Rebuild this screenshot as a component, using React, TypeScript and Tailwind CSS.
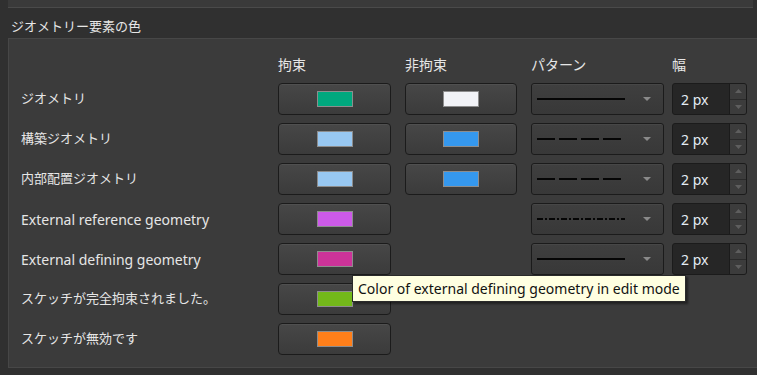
import React from 'react';

type Row = {
  label: string;
  constrained: string;
  unconstrained?: string;
  pattern?: 'solid' | 'dash' | 'dashdot';
};

const rows: Row[] = [
  { label: 'ジオメトリ', constrained: '#00a87e', unconstrained: '#f2f3f7', pattern: 'solid' },
  { label: '構築ジオメトリ', constrained: '#98c8f2', unconstrained: '#3598ee', pattern: 'dash' },
  { label: '内部配置ジオメトリ', constrained: '#98c8f2', unconstrained: '#3598ee', pattern: 'dash' },
  { label: 'External reference geometry', constrained: '#cc5ae8', pattern: 'dashdot' },
  { label: 'External defining geometry', constrained: '#cc3399', pattern: 'solid' },
  { label: 'スケッチが完全拘束されました。', constrained: '#73b81a' },
  { label: 'スケッチが無効です', constrained: '#ff7f1a' },
];

const font = { fontFamily: '"Noto Sans", "Noto Sans CJK JP", sans-serif' };

function ColorButton({ color, className = '' }: { color: string; className?: string }) {
  return (
    <div
      className={`h-8 flex items-center justify-center rounded-[4px] border border-[#1b1b1b] bg-gradient-to-b from-[#474747] to-[#3b3b3b] shadow-[inset_0_1px_0_#505050] ${className}`}
    >
      <div className="w-[36px] h-[16px] border border-[#8d8d8d]" style={{ backgroundColor: color }} />
    </div>
  );
}

function PatternCombo({ pattern }: { pattern: 'solid' | 'dash' | 'dashdot' }) {
  const dash = pattern === 'solid' ? undefined : pattern === 'dash' ? '18 4' : '6 2 2 2';
  return (
    <div className="w-[133px] h-8 ml-[14px] flex items-center rounded-[3px] border border-[#1b1b1b] bg-gradient-to-b from-[#3f3f3f] to-[#383838] shadow-[inset_0_1px_0_#474747]">
      <svg width="88" height="4" className="ml-[5px]">
        <line x1="0" y1="2" x2="88" y2="2" stroke="#050505" strokeWidth="2" strokeDasharray={dash} />
      </svg>
      <svg width="8" height="4" className="ml-[18px]">
        <polygon points="0,0 8,0 4,4" fill="#8a8a8a" />
      </svg>
    </div>
  );
}

function WidthSpin() {
  return (
    <div className="w-[75px] h-8 ml-[8px] flex rounded-[3px] border border-[#1b1b1b] bg-[#262626] overflow-hidden">
      <div className="flex-1 flex items-center pl-[8px] text-[14px] text-[#e4ecf4]">2 px</div>
      <div className="w-[17px] flex flex-col border-l border-[#1b1b1b]">
        <div className="flex-1 flex items-center justify-center bg-[#3c3c3c] border-b border-[#2a2a2a]">
          <svg width="7" height="4">
            <polygon points="0,4 7,4 3.5,0" fill="#5e5e5e" />
          </svg>
        </div>
        <div className="flex-1 flex items-center justify-center bg-[#3c3c3c]">
          <svg width="7" height="4">
            <polygon points="0,0 7,0 3.5,4" fill="#5e5e5e" />
          </svg>
        </div>
      </div>
    </div>
  );
}

export default function App() {
  return (
    <div className="relative w-[757px] h-[375px] bg-[#303030] overflow-hidden text-[#e6e6e6]" style={font}>
      {/* previous panel */}
      <div className="ml-[8px] w-[745px] h-[8px] bg-[#3a3a3a] border-b border-[#4a4a4a]" />

      {/* group title */}
      <div className="h-[30px] pl-[11px] pt-[8px] text-[13px] leading-[20px]">ジオメトリー要素の色</div>

      {/* group box */}
      <div className="ml-[8px] w-[760px] border border-[#474747] bg-[#3b3b3b] pl-[12px] pt-[15px] pb-[12px]">
        <div className="flex h-[20px] items-center text-[14px]">
          <div className="w-[257px]" />
          <div className="w-[127px]">拘束</div>
          <div className="w-[126px]">非拘束</div>
          <div className="w-[141px]">パターン</div>
          <div>幅</div>
        </div>

        <div className="mt-[9px] flex flex-col gap-2">
          {rows.map((row) => (
            <div key={row.label} className="flex items-center h-8">
              <div className={`w-[257px] ${/^[A-Za-z]/.test(row.label) ? 'text-[14px]' : 'text-[13px]'}`}>
                {row.label}
              </div>
              <ColorButton color={row.constrained} className="w-[113px]" />
              {row.unconstrained ? (
                <ColorButton color={row.unconstrained} className="w-[112px] ml-[14px]" />
              ) : (
                <div className="w-[112px] ml-[14px]" />
              )}
              {row.pattern && (
                <>
                  <PatternCombo pattern={row.pattern} />
                  <WidthSpin />
                </>
              )}
            </div>
          ))}
        </div>
      </div>

      {/* tooltip */}
      <div className="absolute left-[352px] top-[275px] w-[334px] h-[27px] flex items-center pl-[5px] bg-[#ffffe1] border border-[#2a2a2a] text-[14px] text-[#111] shadow-[2px_2px_2px_rgba(0,0,0,0.45)]">
        Color of external defining geometry in edit mode
      </div>
    </div>
  );
}
